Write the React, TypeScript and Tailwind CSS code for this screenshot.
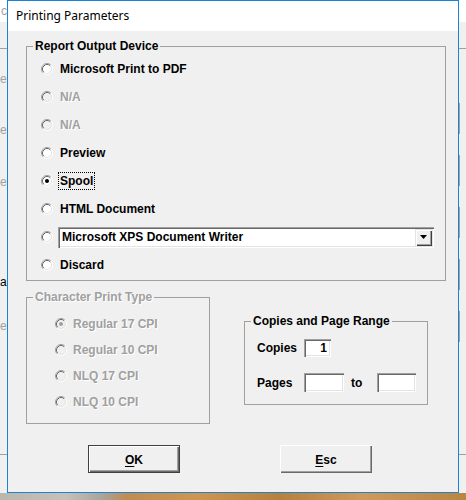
import * as React from "react";

const sunken =
    "bg-white shadow-[inset_1px_1px_0_#a0a0a0,inset_2px_2px_0_#696969,inset_-1px_-1px_0_#ffffff,inset_-2px_-2px_0_#e3e3e3]";

function Radio({ checked = false, disabled = false }: { checked?: boolean; disabled?: boolean }) {
    return (
        <svg width="12" height="12" viewBox="0 0 12 12" className="shrink-0">
            <circle cx="6" cy="6" r="5" fill={disabled ? "#f0f0f0" : "#ffffff"} />
            <path d="M2.11 9.89A5.5 5.5 0 0 1 9.89 2.11" fill="none" stroke="#a0a0a0" />
            <path d="M2.82 9.18A4.5 4.5 0 0 1 9.18 2.82" fill="none" stroke="#696969" />
            <path d="M9.89 2.11A5.5 5.5 0 0 1 2.11 9.89" fill="none" stroke="#ffffff" />
            <path d="M9.18 2.82A4.5 4.5 0 0 1 2.82 9.18" fill="none" stroke="#e3e3e3" />
            {checked && <circle cx="6" cy="6" r="2" fill={disabled ? "#a0a0a0" : "#000000"} />}
        </svg>
    );
}

function OutputRow({ label, disabled = false }: { label: string; disabled?: boolean }) {
    return (
        <div className="flex h-[28px] items-center">
            <Radio disabled={disabled} />
            <span
                className={
                    disabled
                        ? "ml-[7px] text-[#a0a0a0] [text-shadow:1px_1px_0_#ffffff]"
                        : "ml-[7px] text-black"
                }
            >
                {label}
            </span>
        </div>
    );
}

function CpiRow({ label, checked = false }: { label: string; checked?: boolean }) {
    return (
        <div className="flex h-[26px] items-center">
            <Radio checked={checked} disabled />
            <span className="ml-[6px] text-[#a0a0a0] [text-shadow:1px_1px_0_#ffffff]">{label}</span>
        </div>
    );
}

export default function App() {
    return (
        <div className="relative h-[500px] w-[466px] overflow-hidden font-['Liberation_Sans',Arial,sans-serif] text-[12px] font-bold leading-[14px]">
            {/* window behind the dialog */}
            <div className="flex h-[493px] bg-[#f0f0f0] font-normal">
                <div className="flex w-[7px] flex-col overflow-hidden whitespace-nowrap">
                    <div className="h-[22px] bg-white pl-[1px] pt-[4px] text-[#a0a0a0]">c</div>
                    <div className="h-[26px]" />
                    <div className="h-px bg-[#a0a0a0]" />
                    <div className="h-[23px]" />
                    <div className="h-[14px] text-[#a0a0a0]">e</div>
                    <div className="h-[37px]" />
                    <div className="h-[14px] text-[#a0a0a0]">e</div>
                    <div className="h-[38px]" />
                    <div className="h-[14px] text-[#a0a0a0]">e</div>
                    <div className="h-[86px]" />
                    <div className="h-[14px] text-black">a</div>
                    <div className="h-[29px]" />
                    <div className="flex h-[15px] items-center">
                        <span className="text-[#a0a0a0]">e</span>
                        <span className="ml-auto h-[15px] w-[2px] bg-[#a0a0a0]" />
                    </div>
                    <div className="h-[121px]" />
                    <div className="h-px bg-[#a0a0a0]" />
                </div>
                <div className="flex-1" />
                <div className="flex w-[7px] flex-col">
                    <div className="h-[22px] bg-white" />
                    <div className="h-[26px]" />
                    <div className="h-px bg-[#a0a0a0]" />
                    <div className="h-[54px]" />
                    <div className="h-[31px] border-l border-[#a0a0a0]" />
                    <div className="h-[21px]" />
                    <div className="h-[31px] border-l border-[#a0a0a0]" />
                    <div className="h-[21px]" />
                    <div className="h-[31px] border-l border-[#a0a0a0]" />
                    <div className="h-[21px]" />
                    <div className="h-[31px] border-l border-[#a0a0a0]" />
                    <div className="h-[21px]" />
                    <div className="h-[31px] border-l border-[#a0a0a0]" />
                    <div className="h-[112px]" />
                    <div className="h-px bg-[#a0a0a0]" />
                </div>
            </div>
            <div className="h-[7px] bg-[linear-gradient(90deg,#b9b6ad_0%,#c6c2b7_14%,#a9a399_22%,#c08c52_27%,#cf9651_42%,#b7803f_60%,#d09a5a_78%,#b98543_100%)]" />

            {/* dialog */}
            <div className="absolute left-[7px] top-0 flex h-[493px] w-[452px] flex-col border border-[#1883d7] bg-[#f0f0f0]">
                <div className="flex h-[30px] items-center bg-white pl-[8px] font-['Noto_Sans',sans-serif] text-[12px] font-normal text-black">
                    Printing Parameters
                </div>

                <fieldset className="ml-[18px] mt-[8px] w-[420px] border border-[#a0a0a0]">
                    <legend className="ml-[6px] px-[2px] text-black">Report Output Device</legend>
                    <div className="flex flex-col pb-[1px] pl-[14px] pt-[2px]">
                        <OutputRow label="Microsoft Print to PDF" />
                        <OutputRow label="N/A" disabled />
                        <OutputRow label="N/A" disabled />
                        <OutputRow label="Preview" />
                        <div className="flex h-[28px] items-center">
                            <Radio checked />
                            <span className="ml-[5px] border border-dotted border-black px-[1px] py-[1px] text-black">
                                Spool
                            </span>
                        </div>
                        <OutputRow label="HTML Document" />
                        <div className="flex h-[28px] items-center">
                            <Radio />
                            <div className={`ml-[5px] flex h-[21px] w-[376px] items-center justify-between pl-[4px] pr-[2px] ${sunken}`}>
                                <span className="text-black">Microsoft XPS Document Writer</span>
                                <span className="flex h-[17px] w-[17px] items-center justify-center bg-[#f0f0f0] shadow-[inset_1px_1px_0_#e3e3e3,inset_2px_2px_0_#ffffff,inset_-1px_-1px_0_#404040,inset_-2px_-2px_0_#a0a0a0]">
                                    <svg width="7" height="4" viewBox="0 0 7 4">
                                        <path d="M0 0h7L3.5 4z" fill="#000000" />
                                    </svg>
                                </span>
                            </div>
                        </div>
                        <OutputRow label="Discard" />
                    </div>
                </fieldset>

                <div className="ml-[18px] mt-[9px] flex items-start gap-[34px]">
                    <fieldset className="w-[184px] border border-[#a0a0a0]">
                        <legend className="ml-[6px] px-[2px] text-[#a0a0a0] [text-shadow:1px_1px_0_#ffffff]">
                            Character Print Type
                        </legend>
                        <div className="flex flex-col pb-[8px] pl-[28px] pt-[7px]">
                            <CpiRow label="Regular 17 CPI" checked />
                            <CpiRow label="Regular 10 CPI" />
                            <CpiRow label="NLQ 17 CPI" />
                            <CpiRow label="NLQ 10 CPI" />
                        </div>
                    </fieldset>

                    <fieldset className="mt-[24px] w-[184px] border border-[#a0a0a0]">
                        <legend className="ml-[6px] px-[2px] text-black">Copies and Page Range</legend>
                        <div className="flex flex-col gap-[16px] pb-[12px] pl-[12px] pt-[10px] text-black">
                            <div className="flex h-[19px] items-center">
                                <span className="w-[47px]">Copies</span>
                                <span className={`flex h-[18px] w-[27px] items-center justify-end pr-[4px] ${sunken}`}>1</span>
                            </div>
                            <div className="flex h-[19px] items-center">
                                <span className="w-[47px]">Pages</span>
                                <span className={`h-[19px] w-[40px] ${sunken}`} />
                                <span className="ml-[7px] w-[26px]">to</span>
                                <span className={`h-[19px] w-[39px] ${sunken}`} />
                            </div>
                        </div>
                    </fieldset>
                </div>

                <div className="ml-[80px] mt-[21px] flex gap-[100px] text-black">
                    <button
                        type="button"
                        className="flex h-[28px] w-[92px] items-center justify-center border border-[#404040] bg-[#f0f0f0] pt-[2px] shadow-[inset_1px_1px_0_#ffffff,inset_-1px_-1px_0_#696969,inset_-2px_-2px_0_#a0a0a0]"
                    >
                        <span>
                            <span className="underline underline-offset-2">O</span>K
                        </span>
                    </button>
                    <button
                        type="button"
                        className="flex h-[28px] w-[92px] items-center justify-center bg-[#f0f0f0] pt-[2px] shadow-[inset_1px_1px_0_#ffffff,inset_-1px_-1px_0_#696969,inset_-2px_-2px_0_#a0a0a0]"
                    >
                        <span>
                            <span className="underline underline-offset-2">E</span>sc
                        </span>
                    </button>
                </div>
            </div>
        </div>
    );
}
